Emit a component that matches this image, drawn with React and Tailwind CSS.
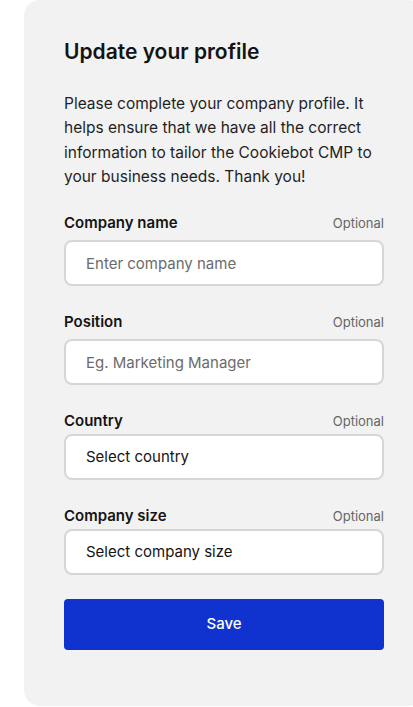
import { useState } from 'react';

const fields = [
  { id: 'company', label: 'Company name', kind: 'input', placeholder: 'Enter company name' },
  { id: 'position', label: 'Position', kind: 'input', placeholder: 'Eg. Marketing Manager' },
  { id: 'country', label: 'Country', kind: 'select', placeholder: 'Select country' },
  { id: 'size', label: 'Company size', kind: 'select', placeholder: 'Select company size' },
];

function Field({ field, value, onChange }) {
  const isInput = field.kind === 'input';
  return (
    <div className="flex flex-col">
      <div className={`flex items-center justify-between ${isInput ? 'mb-[7px]' : 'mb-[3px]'}`}>
        <label htmlFor={field.id} className="text-[15px] font-semibold leading-[20px] text-[#141414]">
          {field.label}
        </label>
        <span className="text-[13px] leading-[20px] text-[#666666]">Optional</span>
      </div>
      {isInput ? (
        <input
          id={field.id}
          value={value}
          onChange={(e) => onChange(e.target.value)}
          placeholder={field.placeholder}
          className="h-[46px] w-full rounded-[8px] border-2 border-[#d6d6d6] bg-white px-[20px] text-[15px] text-[#141414] outline-none placeholder:text-[#6b6b6b]"
        />
      ) : (
        <button
          id={field.id}
          type="button"
          className="flex h-[46px] w-full items-center rounded-[8px] border-2 border-[#d6d6d6] bg-white px-[20px] text-left text-[15px] text-[#141414]"
        >
          {field.placeholder}
        </button>
      )}
    </div>
  );
}

export default function App() {
  const [values, setValues] = useState({ company: '', position: '' });

  return (
    <div className="w-full overflow-hidden bg-white font-['Inter','Liberation_Sans',sans-serif]">
      <div className="ml-6 h-[706px] w-[400px] rounded-2xl bg-[#f2f2f2] pl-10 pr-10 pt-[38px]">
        <h1 className="text-[21px] font-semibold leading-[28px] text-[#141414]">Update your profile</h1>
        <p className="mt-[26px] text-[15.5px] leading-[24.3px] text-[#1f1f1f]">
          Please complete your company profile. It helps ensure that we have all the correct information to tailor the Cookiebot CMP to your business needs. Thank you!
        </p>
        <div className="mt-[24px] flex flex-col gap-[26px]">
          {fields.map((f) => (
            <Field
              key={f.id}
              field={f}
              value={values[f.id] || ''}
              onChange={(v) => setValues((s) => ({ ...s, [f.id]: v }))}
            />
          ))}
        </div>
        <button
          type="button"
          className="mt-[24px] h-[51px] w-full rounded-[4px] bg-[#1032cf] text-[15px] font-medium text-white"
        >
          Save
        </button>
      </div>
    </div>
  );
}
